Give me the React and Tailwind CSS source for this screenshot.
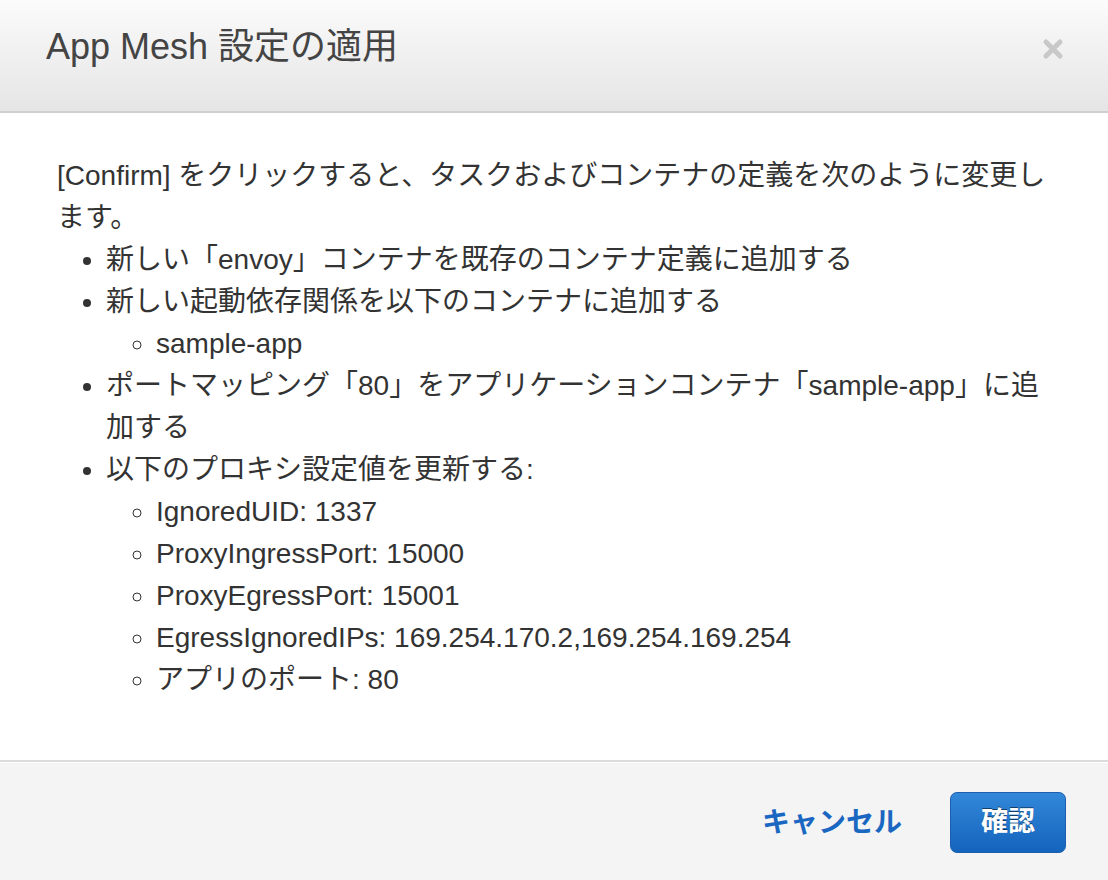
import React from 'react';

const FONT = '"Liberation Sans", "Noto Sans CJK JP", sans-serif';

const ITEMS = [
  { text: '新しい「envoy」コンテナを既存のコンテナ定義に追加する' },
  { text: '新しい起動依存関係を以下のコンテナに追加する', sub: ['sample-app'] },
  { text: 'ポートマッピング「80」をアプリケーションコンテナ「sample-app」に追加する' },
  {
    text: '以下のプロキシ設定値を更新する:',
    sub: [
      'IgnoredUID: 1337',
      'ProxyIngressPort: 15000',
      'ProxyEgressPort: 15001',
      'EgressIgnoredIPs: 169.254.170.2,169.254.169.254',
      'アプリのポート: 80',
    ],
  },
];

export default function App() {
  return (
    <div className="w-[1108px] h-[880px] bg-white flex flex-col overflow-hidden" style={{ fontFamily: FONT }}>
      {/* Header */}
      <div className="h-[113px] shrink-0 flex items-center justify-between pl-[46px] pr-[44px] pb-[18px] bg-gradient-to-b from-[#fbfbfb] to-[#e5e5e5] border-b-2 border-[#cfcfcf]">
        <h1 className="text-[36px] text-[#444]">App Mesh 設定の適用</h1>
        <svg width="22" height="22" viewBox="0 0 22 22" className="mt-[4px]">
          <path d="M4 4 L18 18 M18 4 L4 18" stroke="#c8c8c8" strokeWidth="5" strokeLinecap="round" />
        </svg>
      </div>

      {/* Body */}
      <div className="flex-1 pl-[57px] pr-[44px] pt-[42px] text-[28px] leading-[42px] text-[#333]">
        <p>[Confirm] をクリックすると、タスクおよびコンテナの定義を次のように変更します。</p>
        <ul className="list-disc pl-[49px]">
          {ITEMS.map((item, i) => (
            <li key={i}>
              {item.text}
              {item.sub && (
                <ul className="list-[circle] pl-[50px]">
                  {item.sub.map((s) => (
                    <li key={s}>{s}</li>
                  ))}
                </ul>
              )}
            </li>
          ))}
        </ul>
      </div>

      {/* Footer */}
      <div className="h-[120px] shrink-0 border-t-2 border-[#dcdcdc] bg-[#f4f4f4] flex items-start justify-end gap-[48px] pt-[30px] pr-[42px] shadow-[inset_0_1px_0_#fff]">
        <button className="h-[61px] text-[28px] font-bold text-[#1a67c2]">キャンセル</button>
        <button className="w-[116px] h-[61px] rounded-[7px] bg-gradient-to-b from-[#3288d9] to-[#1463bd] border border-[#1b5fae] text-white text-[27px] font-bold [text-shadow:0_-1px_0_rgba(0,0,0,0.5)]">
          確認
        </button>
      </div>
    </div>
  );
}
